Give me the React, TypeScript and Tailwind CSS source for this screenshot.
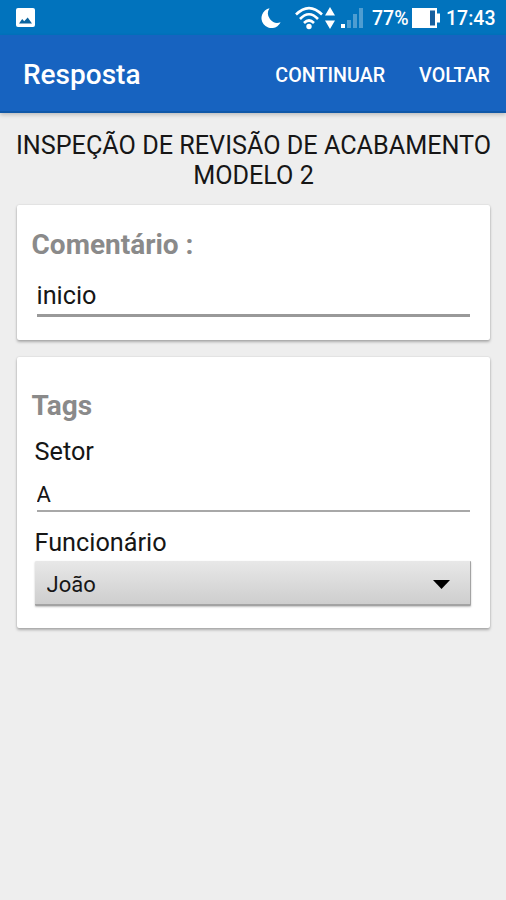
import React, { useState } from "react";

interface CardProps {
  className: string;
  children: React.ReactNode;
}

const people: string[] = ["João"];

const StatusBar = () => {
  return (
    <div className="flex h-[35px] items-center bg-[#0173bd] pl-4 pr-[10px] text-white">
      <svg className="h-[19px] w-[19px]" viewBox="0 0 19 19">
        <rect width="19" height="19" rx="2" fill="#fff" />
        <path d="M3 15.500l3.200-4.500 2 2.200 3.500-3.800 4.300 6.100z" fill="#0c659f" />
      </svg>
      <div className="ml-auto flex items-center">
        {/* do not disturb */}
        <svg className="h-5 w-5" viewBox="0 0 20 20">
          <path d="M8.500.300A10 10 0 1 0 19.600 14.200 9.400 9.400 0 0 1 8.500.300z" fill="#fff" />
        </svg>
        {/* wifi */}
        <svg className="ml-[14px] h-6 w-[28px]" viewBox="0 0 28 24">
          <g fill="none" stroke="#fff" strokeWidth="2.600">
            <path d="M1 8.500Q14-4.500 27 8.500" />
            <path d="M5 13Q14 3.500 23 13" />
            <path d="M9 17Q14 12 19 17" />
          </g>
          <circle cx="14" cy="20.500" r="2.700" fill="#fff" />
        </svg>
        <svg className="ml-0.5 h-[22px] w-[10px]" viewBox="0 0 10 22" fill="#fff">
          <path d="M0 8.500L5 0l5 8.500zM0 13.500h10L5 22z" />
        </svg>
        {/* mobile signal */}
        <svg className="ml-[6px] h-[20px] w-[23px]" viewBox="0 0 23 20" fill="#fff">
          <rect y="16" width="4" height="4" />
          <g opacity="0.3">
            <rect x="6" y="12" width="4" height="8" />
            <rect x="12" y="6" width="4" height="14" />
            <rect x="18" width="4" height="20" />
          </g>
        </svg>
        <span className="ml-2 w-[40px] whitespace-nowrap pt-0.5 text-[19.5px] leading-6 font-medium">77%</span>
        <svg className="h-5 w-[28px]" viewBox="0 0 28 20">
          <path d="M0 0h25v5.500h3v9h-3V20H0z" fill="#fff" />
          <rect x="18" y="2.500" width="5" height="15" fill="#17609f" />
        </svg>
        <span className="ml-[6px] w-[50px] whitespace-nowrap pt-0.5 text-[19.5px] leading-6 font-medium">17:43</span>
      </div>
    </div>
  );
};

const Card = ({ className, children }: CardProps) => (
  <section
    className={`mx-auto w-[473px] rounded-[2px] bg-white shadow-[0_2px_3px_rgba(0,0,0,0.28),0_0_2px_rgba(0,0,0,0.14)] ${className}`}
  >
    {children}
  </section>
);

export default function App() {
  const [comment, setComment] = useState("inicio");
  const [sector, setSector] = useState("A");

  return (
    <div className="h-[900px] w-[506px] overflow-hidden bg-[#eeeeee] font-['Roboto',sans-serif] text-[#161616]">
      <StatusBar />
      <header className="flex h-[78px] items-center border-b-2 border-[#1058a8] bg-[#1763c0] pt-1 pl-[23px] pr-4 text-white shadow-[0_2px_4px_rgba(0,0,0,0.2)]">
        <h1 className="mr-auto text-[28px] font-medium">Resposta</h1>
        <button className="pt-px text-[19.700px] font-medium">CONTINUAR</button>
        <button className="ml-[34px] pt-px text-[19.700px] font-medium">VOLTAR</button>
      </header>

      <main>
        <h2 className="mt-[18px] pl-px text-center text-[25.200px] leading-[30px] whitespace-nowrap">
          INSPEÇÃO DE REVISÃO DE ACABAMENTO
          <br />
          MODELO 2
        </h2>

        <Card className="mt-[14px] h-[135px] pt-6 pl-[15px] pr-5">
          <h3 className="text-[28px] leading-8 font-bold text-[#8a8a8a]">Comentário :</h3>
          <input
            className="mt-[15px] ml-[5px] block h-[41px] w-[433px] border-b-3 border-[#999999] text-[25.250px] outline-none"
            value={comment}
            onChange={(e) => setComment(e.target.value)}
          />
        </Card>

        <Card className="mt-[17px] h-[271px] pt-[33px] pl-[15px] pr-5">
          <h3 className="text-[28px] leading-8 font-bold text-[#8a8a8a]">Tags</h3>
          <label htmlFor="sector" className="mt-[15px] ml-[3px] block text-[25.250px] leading-[30px]">
            Setor
          </label>
          <input
            id="sector"
            className="mt-[11px] ml-[5px] block h-[34px] w-[433px] border-b-2 border-[#a8a8a8] text-[22px] outline-none"
            value={sector}
            onChange={(e) => setSector(e.target.value)}
          />
          <label htmlFor="employee" className="mt-4 ml-[3px] block text-[25.250px] leading-[30px]">
            Funcionário
          </label>
          <div className="mt-[3px] ml-[3px] flex h-[45px] w-[436px] items-center rounded-[1px] border-r border-b-2 border-[#a3a3a3] bg-linear-to-b from-[#e8e8e8] to-[#cecece] pt-[3px] pr-5 shadow-[0_1px_2px_rgba(0,0,0,0.25)]">
            <select id="employee" className="grow appearance-none pl-3 text-[22px] outline-none">
              {people.map((person) => (
                <option key={person}>{person}</option>
              ))}
            </select>
            <svg className="h-[9px] w-[17px]" viewBox="0 0 17 9">
              <path d="M0 0h17L8.500 9z" fill="#000" />
            </svg>
          </div>
        </Card>
      </main>
    </div>
  );
}
